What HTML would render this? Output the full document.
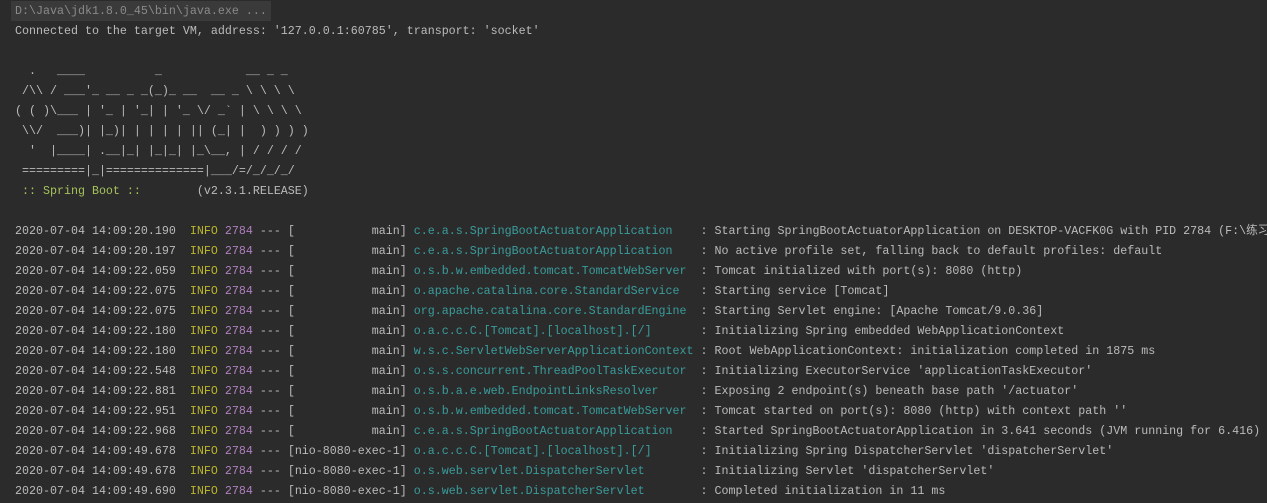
<!DOCTYPE html>
<html><head><meta charset="utf-8"><style>
html,body{margin:0;padding:0;background:#2b2b2b;width:1267px;height:503px;overflow:hidden}
pre{margin:0;padding:1px 0 0 15px;font-family:"Liberation Mono","Noto Sans CJK SC",monospace;font-size:11.667px;line-height:20px;color:#bbbbbb;white-space:pre}
.h{color:#8a8a8a;background:#3a3a3a;margin-left:-4px;padding:3px 4px 3px}
.g{color:#a5c25c}
.i{color:#bbb529}
.p{color:#b07fc0}
.t{color:#3a9c9c}
</style></head><body><pre><span class="h">D:\Java\jdk1.8.0_45\bin\java.exe ...</span>
Connected to the target VM, address: '127.0.0.1:60785', transport: 'socket'

  .   ____          _            __ _ _
 /\\ / ___'_ __ _ _(_)_ __  __ _ \ \ \ \
( ( )\___ | '_ | '_| | '_ \/ _` | \ \ \ \
 \\/  ___)| |_)| | | | | || (_| |  ) ) ) )
  '  |____| .__|_| |_|_| |_\__, | / / / /
 =========|_|==============|___/=/_/_/_/
<span class="g"> :: Spring Boot :: </span>       (v2.3.1.RELEASE)

2020-07-04 14:09:20.190  <span class="i">INFO</span> <span class="p">2784</span> --- [           main] <span class="t">c.e.a.s.SpringBootActuatorApplication   </span> : Starting SpringBootActuatorApplication on DESKTOP-VACFK0G with PID 2784 (F:\练习
2020-07-04 14:09:20.197  <span class="i">INFO</span> <span class="p">2784</span> --- [           main] <span class="t">c.e.a.s.SpringBootActuatorApplication   </span> : No active profile set, falling back to default profiles: default
2020-07-04 14:09:22.059  <span class="i">INFO</span> <span class="p">2784</span> --- [           main] <span class="t">o.s.b.w.embedded.tomcat.TomcatWebServer </span> : Tomcat initialized with port(s): 8080 (http)
2020-07-04 14:09:22.075  <span class="i">INFO</span> <span class="p">2784</span> --- [           main] <span class="t">o.apache.catalina.core.StandardService  </span> : Starting service [Tomcat]
2020-07-04 14:09:22.075  <span class="i">INFO</span> <span class="p">2784</span> --- [           main] <span class="t">org.apache.catalina.core.StandardEngine </span> : Starting Servlet engine: [Apache Tomcat/9.0.36]
2020-07-04 14:09:22.180  <span class="i">INFO</span> <span class="p">2784</span> --- [           main] <span class="t">o.a.c.c.C.[Tomcat].[localhost].[/]      </span> : Initializing Spring embedded WebApplicationContext
2020-07-04 14:09:22.180  <span class="i">INFO</span> <span class="p">2784</span> --- [           main] <span class="t">w.s.c.ServletWebServerApplicationContext</span> : Root WebApplicationContext: initialization completed in 1875 ms
2020-07-04 14:09:22.548  <span class="i">INFO</span> <span class="p">2784</span> --- [           main] <span class="t">o.s.s.concurrent.ThreadPoolTaskExecutor </span> : Initializing ExecutorService 'applicationTaskExecutor'
2020-07-04 14:09:22.881  <span class="i">INFO</span> <span class="p">2784</span> --- [           main] <span class="t">o.s.b.a.e.web.EndpointLinksResolver     </span> : Exposing 2 endpoint(s) beneath base path '/actuator'
2020-07-04 14:09:22.951  <span class="i">INFO</span> <span class="p">2784</span> --- [           main] <span class="t">o.s.b.w.embedded.tomcat.TomcatWebServer </span> : Tomcat started on port(s): 8080 (http) with context path ''
2020-07-04 14:09:22.968  <span class="i">INFO</span> <span class="p">2784</span> --- [           main] <span class="t">c.e.a.s.SpringBootActuatorApplication   </span> : Started SpringBootActuatorApplication in 3.641 seconds (JVM running for 6.416)
2020-07-04 14:09:49.678  <span class="i">INFO</span> <span class="p">2784</span> --- [nio-8080-exec-1] <span class="t">o.a.c.c.C.[Tomcat].[localhost].[/]      </span> : Initializing Spring DispatcherServlet 'dispatcherServlet'
2020-07-04 14:09:49.678  <span class="i">INFO</span> <span class="p">2784</span> --- [nio-8080-exec-1] <span class="t">o.s.web.servlet.DispatcherServlet       </span> : Initializing Servlet 'dispatcherServlet'
2020-07-04 14:09:49.690  <span class="i">INFO</span> <span class="p">2784</span> --- [nio-8080-exec-1] <span class="t">o.s.web.servlet.DispatcherServlet       </span> : Completed initialization in 11 ms</pre></body></html>
